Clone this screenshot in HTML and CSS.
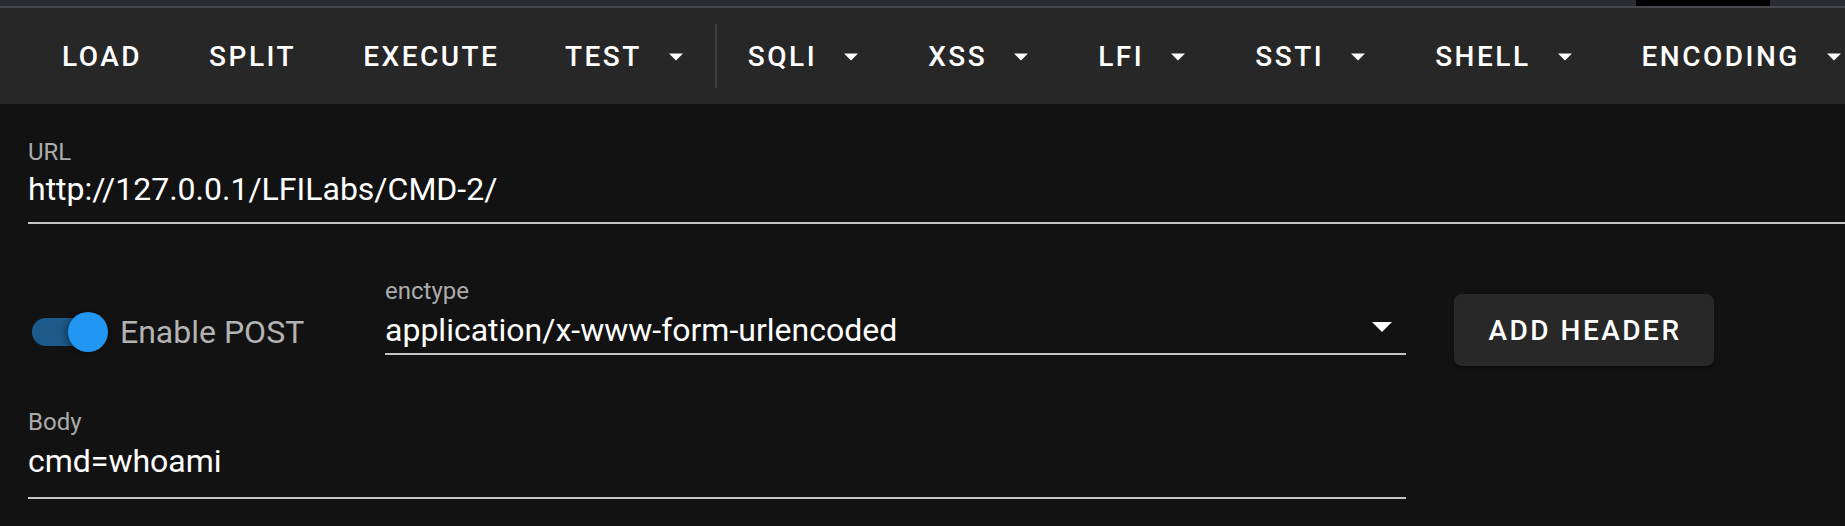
FILE: index.html
```html
<!DOCTYPE html>
<html lang="en">
<head>
<meta charset="utf-8">
<title>HackBar</title>
<link rel="stylesheet" href="styles.css">
</head>
<body>
<div class="app">
  <div class="tabstrip"><div class="tab-gap"></div><div class="tab-active"></div></div>
  <nav class="toolbar">
    <button class="tb-btn tb-plain">LOAD</button>
    <button class="tb-btn tb-plain">SPLIT</button>
    <button class="tb-btn tb-plain">EXECUTE</button>
    <button class="tb-btn tb-menu">TEST<svg class="caret" viewBox="0 0 26 14" width="26" height="14"><polygon points="6,3.5 20,3.5 13,10.5" fill="#fff"/></svg></button>
    <span class="tb-divider"></span>
    <button class="tb-btn tb-menu">SQLI<svg class="caret" viewBox="0 0 26 14" width="26" height="14"><polygon points="6,3.5 20,3.5 13,10.5" fill="#fff"/></svg></button>
    <button class="tb-btn tb-menu">XSS<svg class="caret" viewBox="0 0 26 14" width="26" height="14"><polygon points="6,3.5 20,3.5 13,10.5" fill="#fff"/></svg></button>
    <button class="tb-btn tb-menu">LFI<svg class="caret" viewBox="0 0 26 14" width="26" height="14"><polygon points="6,3.5 20,3.5 13,10.5" fill="#fff"/></svg></button>
    <button class="tb-btn tb-menu">SSTI<svg class="caret" viewBox="0 0 26 14" width="26" height="14"><polygon points="6,3.5 20,3.5 13,10.5" fill="#fff"/></svg></button>
    <button class="tb-btn tb-menu">SHELL<svg class="caret" viewBox="0 0 26 14" width="26" height="14"><polygon points="6,3.5 20,3.5 13,10.5" fill="#fff"/></svg></button>
    <button class="tb-btn tb-menu">ENCODING<svg class="caret" viewBox="0 0 26 14" width="26" height="14"><polygon points="6,3.5 20,3.5 13,10.5" fill="#fff"/></svg></button>
  </nav>
  <main class="content">
    <div class="field url-field">
      <div class="field-label">URL</div>
      <div class="field-value">http://127.0.0.1/LFILabs/CMD-2/</div>
      <div class="field-line"></div>
    </div>
    <div class="row">
      <div class="switch-group">
        <div class="switch"><span class="switch-track"></span><span class="switch-thumb"></span></div>
        <span class="switch-label">Enable POST</span>
      </div>
      <div class="field select-field">
        <div class="field-label">enctype</div>
        <div class="field-value select-value">
          <span>application/x-www-form-urlencoded</span>
          <svg class="select-caret" viewBox="0 0 20 10" width="20" height="10"><polygon points="0,0 20,0 10,10" fill="#fff"/></svg>
        </div>
        <div class="field-line select-line"></div>
      </div>
      <button class="add-header">ADD HEADER</button>
    </div>
    <div class="field body-field">
      <div class="field-label">Body</div>
      <div class="field-value body-value">cmd=whoami</div>
      <div class="field-line body-line"></div>
    </div>
  </main>
</div>
</body>
</html>
```
FILE: styles.css
```css
* { box-sizing: border-box; }
html, body {
  margin: 0;
  padding: 0;
  background: #121212;
  overflow: hidden;
}
body {
  font-family: Roboto, "Liberation Sans", sans-serif;
  color: #fff;
}
.app {
  width: 1845px;
  height: 526px;
  overflow: hidden;
}
.tabstrip {
  height: 8px;
  background: #2b2c31;
  border-bottom: 2px solid #48474d;
  display: flex;
}
.tab-gap { width: 1636px; }
.tab-active { width: 134px; height: 6px; background: #000; }
.toolbar {
  height: 96px;
  background: #272727;
  display: flex;
  align-items: center;
  flex-wrap: nowrap;
  padding-left: 28.5px;
  padding-top: 2px;
  white-space: nowrap;
}
.tb-btn {
  flex: none;
  height: 72px;
  display: flex;
  align-items: center;
  background: transparent;
  border: none;
  color: #fff;
  font-family: Roboto, "Liberation Sans", sans-serif;
  font-size: 28px;
  font-weight: 500;
  letter-spacing: 2.5px;
  padding: 0 32px;
  line-height: 1;
}
.tb-plain { padding: 0 33.5px; }
.caret {
  flex: none;
  margin-left: 21px;
  display: block;
}
.tb-divider {
  flex: none;
  width: 2px;
  height: 64px;
  margin-top: -2px;
  background: #3f3f3f;
  margin-left: -6px;
  margin-right: -1px;
}
.content {
  padding-left: 28px;
}
.field-label {
  font-size: 24px;
  line-height: 28px;
  color: #ababab;
}
.field-value {
  font-size: 32px;
  line-height: 40px;
  color: #fff;
}
.field-line {
  height: 2px;
  background: #c4c4c4;
}
.url-field { padding-top: 34px; }
.url-field .field-value { margin-top: 3px; }
.url-field .field-line { margin-top: 13px; }
.row {
  display: flex;
  align-items: flex-start;
  margin-top: 53px;
  height: 89px;
}
.switch-group {
  flex: none;
  width: 357px;
  display: flex;
  align-items: center;
  margin-top: 35px;
  padding-left: 4px;
}
.switch {
  position: relative;
  width: 76px;
  height: 40px;
  flex: none;
}
.switch-track {
  position: absolute;
  left: 0;
  top: 6px;
  width: 72px;
  height: 28px;
  border-radius: 14px;
  background: #1c5a8c;
}
.switch-thumb {
  position: absolute;
  left: 36px;
  top: 0;
  width: 40px;
  height: 40px;
  border-radius: 50%;
  background: #2196f3;
  box-shadow: -3px 1px 6px rgba(0,0,0,0.35);
}
.switch-label {
  margin-left: 12px;
  font-size: 32px;
  line-height: 40px;
  color: #b3b3b3;
}
.select-field {
  flex: none;
  width: 1021px;
}
.select-value {
  margin-top: 5px;
  display: flex;
  align-items: center;
  justify-content: space-between;
}
.select-caret {
  display: block;
  margin-right: 14px;
  margin-bottom: 6px;
}
.select-line { margin-top: 3px; }
.add-header {
  flex: none;
  margin-top: 17px;
  margin-left: 48px;
  width: 260px;
  height: 72px;
  border: none;
  border-radius: 8px;
  background: #282828;
  box-shadow: 0 3px 2px -2px rgba(0,0,0,0.3), 0 2px 4px rgba(0,0,0,0.2);
  color: #fff;
  font-family: Roboto, "Liberation Sans", sans-serif;
  font-size: 28px;
  font-weight: 500;
  letter-spacing: 2.5px;
  padding: 0 0 0 2px;
}
.body-field {
  width: 1378px;
  margin-top: 42px;
}
.body-value { margin-top: 5px; }
.body-line { margin-top: 16px; }
```
